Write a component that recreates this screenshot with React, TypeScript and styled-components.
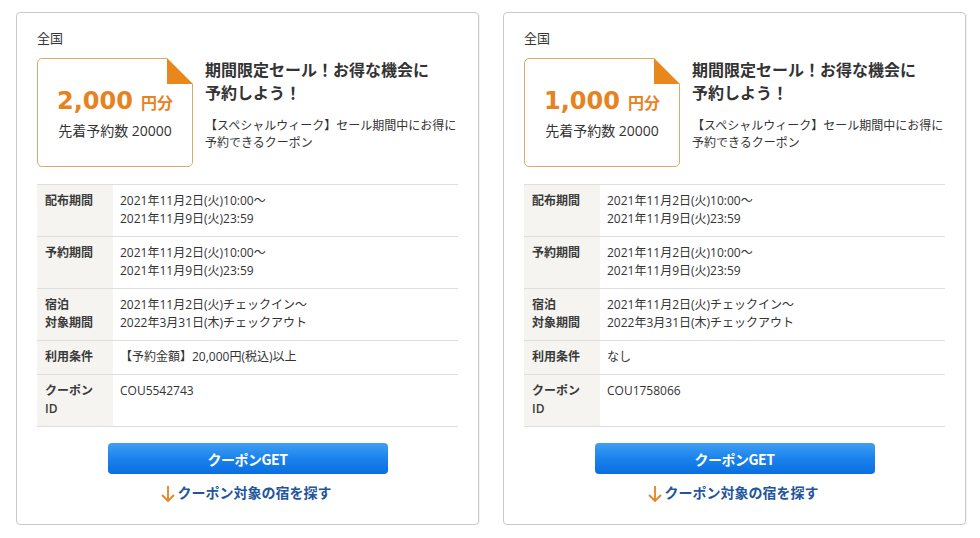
import React from "react";
import styled, { createGlobalStyle } from "styled-components";

const GlobalStyle = createGlobalStyle`
  html, body { margin: 0; padding: 0; background: #fff; }
  body {
    font-family: "Open Sans", "Noto Sans CJK JP", sans-serif;
    color: #333;
  }
`;

const Page = styled.div`
  display: flex;
  gap: 24px;
  padding: 12px 0 0 16px;
  align-items: flex-start;
`;

const Card = styled.section`
  box-sizing: border-box;
  width: 463px;
  height: 513px;
  border: 1px solid #c9c9c9;
  border-radius: 4px;
  box-shadow: 1px 1px 1px rgba(0, 0, 0, 0.06);
  padding: 16px 20px 0 20px;
  display: flex;
  flex-direction: column;
`;

const Area = styled.div`
  font-size: 13px;
  line-height: 18px;
  height: 18px;
  margin-bottom: 11px;
`;

const Header = styled.div`
  display: flex;
  gap: 12px;
  align-items: flex-start;
`;

const CouponBox = styled.div`
  position: relative;
  box-sizing: border-box;
  width: 156px;
  height: 109px;
  flex: none;
  border: 1px solid #d9ab66;
  border-radius: 5px;
  background: #fff;
  display: flex;
  flex-direction: column;
  align-items: center;
  justify-content: center;
  padding-top: 2px;
`;

const Fold = styled.div`
  position: absolute;
  top: -1px;
  right: -1px;
  width: 26px;
  height: 26px;
  background: #fff;
  &::after {
    content: "";
    position: absolute;
    inset: 0;
    background: #e8881c;
    clip-path: polygon(0 0, 100% 100%, 0 100%);
  }
`;

const Amount = styled.div`
  color: #e8821e;
  font-weight: bold;
  display: flex;
  align-items: baseline;
  gap: 8px;
  line-height: 30px;
`;

const AmountNum = styled.span`
  font-family: "DejaVu Sans", sans-serif;
  font-size: 24px;
`;

const AmountUnit = styled.span`
  font-family: "Noto Sans CJK JP", sans-serif;
  font-size: 16px;
`;

const Stock = styled.div`
  font-size: 14px;
  line-height: 20px;
  margin-top: 4px;
`;

const Info = styled.div`
  display: flex;
  flex-direction: column;
`;

const Title = styled.h2`
  margin: 0;
  font-family: "Noto Sans CJK JP", sans-serif;
  font-size: 16px;
  line-height: 23px;
  font-weight: bold;
  color: #333;
`;

const Desc = styled.p`
  margin: 13px 0 0;
  font-size: 12px;
  line-height: 17px;
`;

const Table = styled.div`
  margin-top: 17px;
  border-top: 1px solid #dedede;
  display: flex;
  flex-direction: column;
`;

const Row = styled.div`
  display: grid;
  grid-template-columns: 76px 1fr;
  border-bottom: 1px solid #dedede;
  font-size: 12px;
  line-height: 18px;
`;

const Label = styled.div`
  background: #f6f4f0;
  padding: 7px 0 8px 8px;
  font-weight: 600;
  color: #3a3a3a;
`;

const Value = styled.div`
  padding: 7px 0 8px 7px;
`;

const Actions = styled.div`
  display: flex;
  flex-direction: column;
  align-items: center;
  margin-top: 16px;
`;

const GetButton = styled.button`
  width: 280px;
  height: 31px;
  border: none;
  border-radius: 4px;
  background: linear-gradient(to bottom, #3f9ff2 0%, #1a82ec 50%, #0a6ee0 100%);
  color: #fff;
  font-family: "Noto Sans CJK JP", sans-serif;
  font-weight: bold;
  font-size: 14px;
  letter-spacing: -0.5px;
  cursor: pointer;
`;

const SearchLink = styled.a`
  margin-top: 7px;
  display: flex;
  align-items: center;
  gap: 2px;
  color: #23559d;
  font-family: "Noto Sans CJK JP", sans-serif;
  font-size: 14px;
  font-weight: bold;
  line-height: 20px;
  text-decoration: none;
  margin-left: -4px;
`;

const Arrow = styled.svg`
  width: 16px;
  height: 18px;
  margin-top: 4px;
`;

type RowData = { label: React.ReactNode; value: React.ReactNode };

type CouponData = {
  amount: string;
  condition: string;
  id: string;
};

const DownArrow = () => (
  <Arrow viewBox="0 0 16 18">
    <path d="M8 1 V16 M2 10 L8 16 L14 10" stroke="#e8821e" strokeWidth="1.8" fill="none" strokeLinejoin="miter" />
  </Arrow>
);

const Coupon = ({ amount, condition, id }: CouponData) => {
  const rows: RowData[] = [
    { label: "配布期間", value: <>2021年11月2日(火)10:00〜<br />2021年11月9日(火)23:59</> },
    { label: "予約期間", value: <>2021年11月2日(火)10:00〜<br />2021年11月9日(火)23:59</> },
    { label: <>宿泊<br />対象期間</>, value: <>2021年11月2日(火)チェックイン〜<br />2022年3月31日(木)チェックアウト</> },
    { label: "利用条件", value: condition },
    { label: <>クーポン<br />ID</>, value: id },
  ];
  return (
    <Card>
      <Area>全国</Area>
      <Header>
        <CouponBox>
          <Fold />
          <Amount>
            <AmountNum>{amount}</AmountNum>
            <AmountUnit>円分</AmountUnit>
          </Amount>
          <Stock>先着予約数 20000</Stock>
        </CouponBox>
        <Info>
          <Title>
            期間限定セール！お得な機会に
            <br />
            予約しよう！
          </Title>
          <Desc>
            【スペシャルウィーク】セール期間中にお得に
            <br />
            予約できるクーポン
          </Desc>
        </Info>
      </Header>
      <Table>
        {rows.map((r, i) => (
          <Row key={i}>
            <Label>{r.label}</Label>
            <Value>{r.value}</Value>
          </Row>
        ))}
      </Table>
      <Actions>
        <GetButton>クーポンGET</GetButton>
        <SearchLink href="#">
          <DownArrow />
          クーポン対象の宿を探す
        </SearchLink>
      </Actions>
    </Card>
  );
};

export default function App() {
  return (
    <>
      <GlobalStyle />
      <Page>
        <Coupon amount="2,000" condition="【予約金額】20,000円(税込)以上" id="COU5542743" />
        <Coupon amount="1,000" condition="なし" id="COU1758066" />
      </Page>
    </>
  );
}
